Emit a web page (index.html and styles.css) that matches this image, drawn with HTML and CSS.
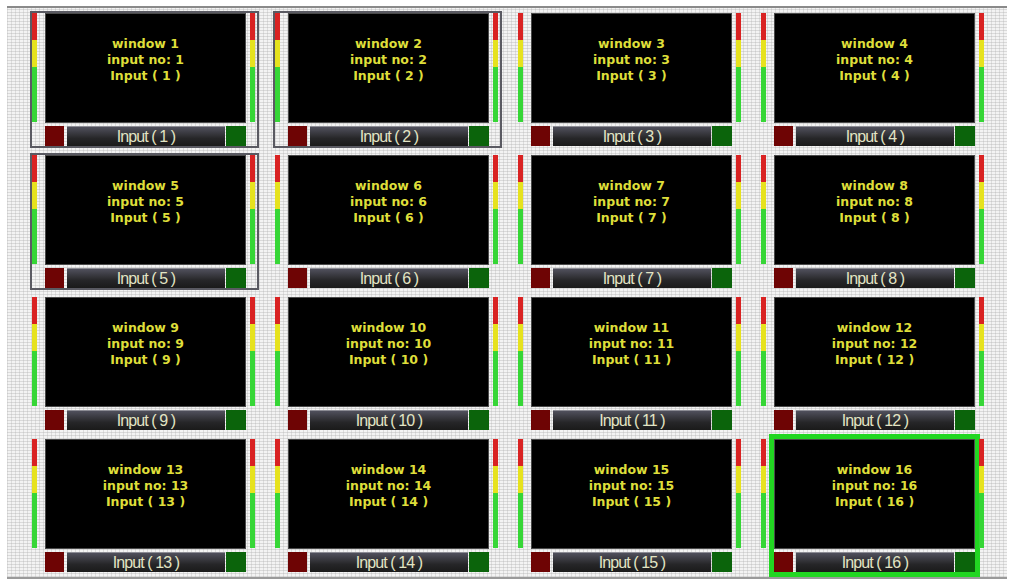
FILE: index.html
```html
<!DOCTYPE html>
<html lang="en">
<head>
    <meta charset="UTF-8">
    <meta name="viewport" content="width=device-width, initial-scale=1.0">
    <title>Multiview Layout</title>
    <link rel="stylesheet" href="styles.css">
</head>
<body>

    <!-- 4x4 multiviewer wall -->
    <div class="wall">
        <div class="grid" id="grid">
            <!-- windows are injected here -->
        </div>
    </div>

    <script>
        // windows with the dark selection frame
        const framed = [1, 2, 5];
        // the active window (green frame)
        const active = 16;

        function meter() {
            return `
                <div class="meter">
                    <span class="seg red"></span>
                    <span class="seg yellow"></span>
                    <span class="seg green"></span>
                </div>`;
        }

        function renderWall() {
            const grid = document.getElementById('grid');
            grid.innerHTML = '';

            for (let i = 1; i <= 16; i++) {
                const cell = document.createElement('div');
                cell.className = 'cell';
                cell.innerHTML = `
                    <div class="unit${framed.includes(i) ? ' framed' : ''}">
                        ${meter()}
                        <div class="panel${i === active ? ' active' : ''}">
                            <div class="screen">
                                <div>window ${i}</div>
                                <div>input no: ${i}</div>
                                <div>Input ( ${i} )</div>
                            </div>
                            <div class="bar">
                                <span class="led led-red"></span>
                                <span class="label">Input ( ${i} )</span>
                                <span class="led led-green"></span>
                            </div>
                        </div>
                        ${meter()}
                    </div>`;
                grid.appendChild(cell);
            }
        }

        renderWall();
    </script>

</body>
</html>
```

FILE: styles.css
```css
body {
    margin: 0;
    background-color: #ffffff;
    font-family: 'DejaVu Sans', sans-serif;
}

/* Wall background with the fine grid texture */
.wall {
    margin: 6px 8px 0 7px;
    height: 569px;
    border-top: 2px solid #8a8a8a;
    border-bottom: 2px solid #9a9a9a;
    background-color: #f3f3f3;
    background-image:
        repeating-linear-gradient(0deg, rgba(170, 170, 170, 0.35) 0 1px, transparent 1px 3px),
        repeating-linear-gradient(90deg, rgba(170, 170, 170, 0.3) 0 1px, transparent 1px 4px);
}

.grid {
    display: grid;
    grid-template-columns: repeat(4, 243px);
    grid-template-rows: repeat(3, 142px) 140px;
    padding: 3px 0 0 23px;
}

.cell {
    display: flex;
    align-items: flex-start;
}

/* Meters + panel */
.unit {
    display: flex;
    align-items: flex-start;
    gap: 8px;
    padding-right: 2px;
    border: 2px solid transparent;
}

.unit .meter + .panel + .meter {
    margin-left: -4px;
}

.unit.framed {
    border-color: #5a5a62;
}

/* Audio level meters */
.meter {
    display: flex;
    flex-direction: column;
    width: 5px;
    height: 109px;
}

.seg.red {
    height: 27px;
    background-color: #d92222;
}

.seg.yellow {
    height: 27px;
    background-color: #e6e21e;
}

.seg.green {
    flex: 1;
    background-color: #36d636;
}

/* Black video window */
.panel {
    width: 201px;
}

.panel.active {
    outline: 5px solid #22d622;
}

.screen {
    height: 110px;
    box-sizing: border-box;
    background-color: #000;
    border: 1px solid #4a4a4a;
    padding-top: 22px;
    color: #dede3a;
    font-size: 12.5px;
    font-weight: bold;
    line-height: 16px;
    text-align: center;
}

/* Input label bar */
.bar {
    display: flex;
    height: 20px;
    margin-top: 3px;
}

.led {
    width: 19px;
}

.led-red {
    background-color: #6e0404;
    margin-right: 3px;
}

.led-green {
    width: 20px;
    background-color: #0b640b;
    margin-left: 1px;
}

.label {
    flex: 1;
    border-top: 1px solid #8c8c94;
    background: linear-gradient(#50505c, #262628 60%, #1a1a1a);
    color: #e2e4c4;
    font-family: 'Liberation Sans', sans-serif;
    font-size: 16px;
    letter-spacing: -0.9px;
    line-height: 20px;
    text-align: center;
}
```
